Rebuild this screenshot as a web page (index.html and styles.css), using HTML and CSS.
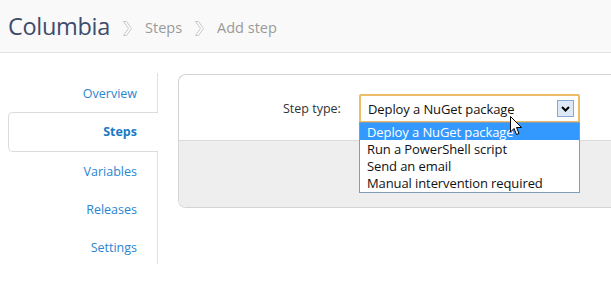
FILE: index.html
```html
<!DOCTYPE html>
<html>
<head>
<meta charset="utf-8">
<link rel="stylesheet" href="styles.css">
</head>
<body>
<header class="header">
  <h1 class="title">Columbia</h1>
  <svg class="chev" width="9" height="15" viewBox="0 0 9 15"><path d="M0.5 0.5 L3.5 0.5 L8.5 7.5 L3.5 14.5 L0.5 14.5 L5.5 7.5 Z" fill="#fbfbfb" stroke="#c9c9c9" stroke-width="1" stroke-linejoin="round"/></svg>
  <span class="crumb">Steps</span>
  <svg class="chev" width="9" height="15" viewBox="0 0 9 15"><path d="M0.5 0.5 L3.5 0.5 L8.5 7.5 L3.5 14.5 L0.5 14.5 L5.5 7.5 Z" fill="#fbfbfb" stroke="#c9c9c9" stroke-width="1" stroke-linejoin="round"/></svg>
  <span class="crumb">Add step</span>
</header>
<div class="main">
  <nav class="nav">
    <a class="nav-item">Overview</a>
    <a class="nav-item active">Steps</a>
    <a class="nav-item">Variables</a>
    <a class="nav-item">Releases</a>
    <a class="nav-item">Settings</a>
  </nav>
  <section class="panel">
    <div class="panel-body">
      <label class="label">Step type:</label>
      <div class="select-wrap">
        <div class="select">
          <span class="select-value">Deploy a NuGet package</span>
          <span class="select-btn">
            <svg width="9" height="6" viewBox="0 0 9 6"><path d="M1 1 L4.5 4.5 L8 1" fill="none" stroke="#000" stroke-width="2"/></svg>
          </span>
        </div>
        <ul class="list">
          <li class="opt sel">Deploy a NuGet package</li>
          <li class="opt">Run a PowerShell script</li>
          <li class="opt">Send an email</li>
          <li class="opt">Manual intervention required</li>
        </ul>
        <svg class="cursor" width="13" height="20" viewBox="0 0 13 20"><path d="M0.5 0.5 L0.5 16 L4 12.5 L6.5 18.5 L9 17.5 L6.5 11.5 L11.5 11.5 Z" fill="#fff" stroke="#000" stroke-width="1"/></svg>
      </div>
    </div>
    <div class="panel-foot"></div>
  </section>
</div>
</body>
</html>
```
FILE: styles.css
```css
html, body { margin: 0; padding: 0; }
body {
  width: 611px; height: 283px; overflow: hidden;
  background: #fff;
  font-family: "Open Sans", "Noto Sans", sans-serif;
}
.header {
  height: 53px;
  background: #f9f9f9;
  border-bottom: 1px solid #e2e2e2;
  display: flex; align-items: center;
  padding-left: 8px;
  box-sizing: border-box;
}
.title {
  margin: 0; font-weight: 400; font-size: 23.5px; color: #3e4c6b;
  letter-spacing: -0.3px;
  position: relative; top: 0px;
}
.chev { margin: 0 13px 0 13px; position: relative; top: 2px; }
.crumb { color: #999; font-size: 14.5px; position: relative; top: 1px; }
.main { display: flex; padding-top: 20px; }
.nav {
  width: 149px; margin-left: 8px;
  display: flex; flex-direction: column;
  border-right: 1px solid #e0e0e0;
  padding-bottom: 18px;
  height: 173px;
}
.nav-item {
  height: 38px; line-height: 40px;
  text-align: right; padding-right: 20px;
  font-size: 12.5px; color: #2a86d0;
  box-sizing: border-box;
}
.nav-item:first-child { height: 39px; line-height: 42px; }
.nav-item.active {
  font-weight: 700; color: #1a7ac4;
  border: 1px solid #dcdcdc; border-right: none;
  border-radius: 5px 0 0 5px;
  background: #fff;
  margin-right: -1px; padding-right: 21px;
  line-height: 38px; height: 40px;
}
.panel {
  margin-left: 20px; margin-top: 1px;
  flex: 1;
  height: 134px;
  border: 1px solid #d4d4d4; border-right: none;
  border-radius: 8px 0 0 8px;
  overflow: visible;
  display: flex; flex-direction: column;
  box-sizing: border-box;
}
.panel-body {
  height: 66px; display: flex; align-items: flex-start;
  padding-top: 19px; box-sizing: border-box;
  border-bottom: 1px solid #dadada;
}
.panel-foot { flex: 1; background: #eeeeee; border-radius: 0 0 0 8px; }
.label { font-size: 12.5px; color: #333; margin-left: 104px; margin-top: 6px; width: 76px; }
.select-wrap { position: relative; }
.select {
  width: 221px; height: 29px; box-sizing: border-box;
  border: 2px solid #ebbd68; border-radius: 2px;
  display: flex; align-items: center; justify-content: space-between;
  padding: 0 4px 0 7px; background: #fff;
}
.select-value { font-size: 13px; color: #111; letter-spacing: -0.1px; }
.select-btn {
  width: 17px; height: 17px; box-sizing: border-box;
  border: 1px solid #86a9d6; background: #dde9f7;
  display: flex; align-items: center; justify-content: center;
}
.list {
  position: absolute; left: 0; top: 28px; margin: 0; padding: 0 0 1px 0;
  list-style: none; width: 221px; box-sizing: border-box;
  border: 1px solid #7f9db9; background: #fff;
}
.opt { height: 17px; line-height: 19px; font-size: 13px; padding-left: 7px; color: #111; letter-spacing: -0.1px; }
.opt.sel { background: #3399ff; color: #fff; }
.cursor { position: absolute; left: 151px; top: 22px; }
```
